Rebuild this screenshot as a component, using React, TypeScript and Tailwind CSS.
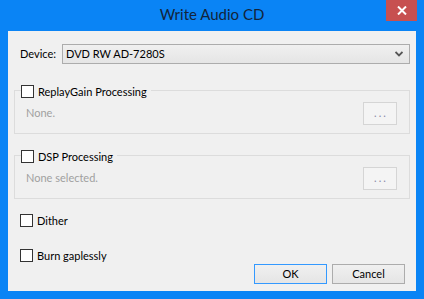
import React from 'react'

const font = { fontFamily: 'Lato, "Noto Sans", "Liberation Sans", sans-serif' }

function Check({ label }: { label: string }) {
  return (
    <label className="flex items-center gap-[4px] text-[11px] leading-[15px] text-black">
      <span className="h-[13px] w-[13px] border border-[#333333] bg-white" />
      <span>{label}</span>
    </label>
  )
}

function Group({ label, text }: { label: string; text: string }) {
  return (
    <div className="h-[44px] border border-[#dcdcdc] pl-[10px] pr-[12px]">
      <div className="-mt-[7px] flex">
        <div className="ml-[-4px] bg-[#f0f0f0] pr-[4px]">
          <Check label={label} />
        </div>
      </div>
      <div className="mt-[3px] flex items-center justify-between">
        <span className="pl-[1px] text-[11px] text-[#a0a0a0]">{text}</span>
        <button className="flex h-[23px] w-[34px] items-center justify-center border border-[#d5d5d5] bg-[#f4f4f4] pl-[2px] text-[11px] tracking-[2px] text-[#8a8aa8]">
          ...
        </button>
      </div>
    </div>
  )
}

export default function App() {
  return (
    <div className="flex h-[299px] w-[424px] flex-col bg-[#0a84f5]" style={font}>
      <div className="relative flex h-[31px] items-center justify-center">
        <span className="pb-[2px] text-[15px] text-[#13243a]">Write Audio CD</span>
        <div className="absolute right-[7px] top-0 flex h-[21px] w-[31px] items-center justify-center bg-[#c75050]">
          <svg width="10" height="9" viewBox="0 0 10 9">
            <path d="M1 0.5 L9 8.5 M9 0.5 L1 8.5" stroke="white" strokeWidth="2" />
          </svg>
        </div>
      </div>
      <div className="mx-[8px] mb-[8px] flex flex-1 flex-col bg-[#f0f0f0] px-[6px]">
        <div className="mt-[13px] flex h-[20px] items-center">
          <span className="w-[48px] pl-[6px] text-[11px] text-black">Device:</span>
          <div className="flex h-[20px] flex-1 items-center justify-between border border-[#acacac] bg-gradient-to-b from-[#f0f0f0] to-[#e5e5e5] pl-[3px] pr-[6px] text-[11px] text-black">
            <span>DVD RW AD-7280S</span>
            <svg width="8" height="6" viewBox="0 0 8 6">
              <path d="M0.5 1 L4 4.5 L7.5 1" fill="none" stroke="#555555" strokeWidth="1.8" />
            </svg>
          </div>
        </div>
        <div className="mt-[26px]">
          <Group label="ReplayGain Processing" text="None." />
        </div>
        <div className="mt-[21px]">
          <Group label="DSP Processing" text="None selected." />
        </div>
        <div className="mt-[14px] pl-[6px]">
          <Check label="Dither" />
        </div>
        <div className="mt-[20px] pl-[6px]">
          <Check label="Burn gaplessly" />
        </div>
        <div className="mt-[1px] flex justify-end gap-[5px] pr-[5px]">
          <button className="h-[20px] w-[73px] border border-[#3399ff] bg-gradient-to-b from-[#f0f0f0] to-[#e5e5e5] text-[11px] text-black">
            OK
          </button>
          <button className="h-[20px] w-[73px] border border-[#acacac] bg-gradient-to-b from-[#f0f0f0] to-[#e5e5e5] text-[11px] text-black">
            Cancel
          </button>
        </div>
      </div>
    </div>
  )
}
